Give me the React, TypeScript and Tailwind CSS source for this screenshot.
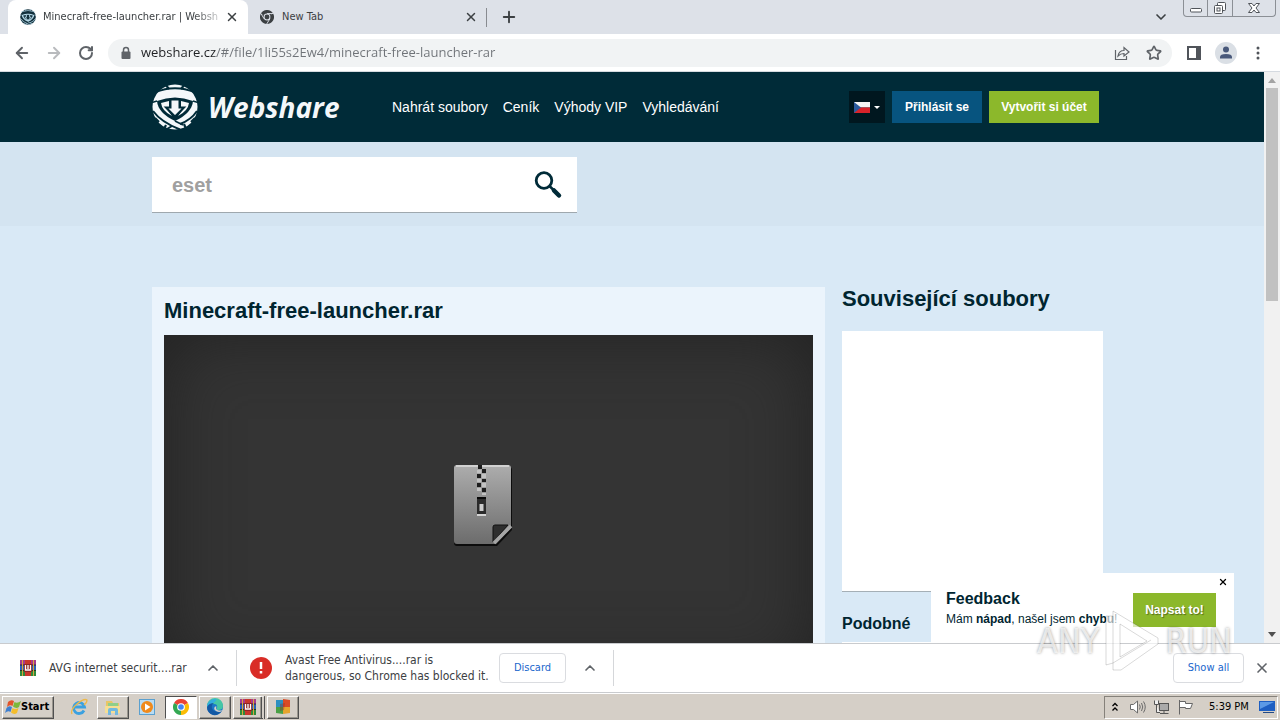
import type { ReactNode } from 'react';
import { ArrowLeft, ArrowRight, ChevronDown, ChevronUp, Plus, RotateCw, Star, X } from 'lucide-react';

const navLinks = ['Nahrát soubory', 'Ceník', 'Výhody VIP', 'Vyhledávání'];

function WebshareMark({ className, fg, bg }: { className: string; fg: string; bg: string }) {
  return (
    <svg viewBox="0 0 46 46" className={className} aria-hidden="true">
      <circle cx="23" cy="23" r="22.500" fill={fg} />
      {/* dark core under the top band */}
      <path d="M5 17Q23 10 41 17Q40 29 23 37Q6 29 5 17Z" fill={bg} />
      <path d="M9 19L17 17V23H13L20 32Q10 27 9 19ZM37 19L29 17V23H33L26 32Q36 27 37 19Z" fill={fg} />
      <path d="M18.500 15.500H27.500V23.500H32L23 32.500L14 23.500H18.500Z" fill={fg} stroke={bg} strokeWidth="2" />
      {/* band edges */}
      <path d="M3 8.500Q23 0 43 8.500" fill="none" stroke={bg} strokeWidth="1.800" />
      <path d="M0 18.500L5 17M46 18.500L41 17" stroke={bg} strokeWidth="1.500" />
      <path d="M1 27Q9 38 28 45.500" fill="none" stroke={bg} strokeWidth="2" />
      <path d="M45 27Q39 36 28 40M20 42L15 45" fill="none" stroke={bg} strokeWidth="2" />
      <path d="M23 37L31 41" stroke={bg} strokeWidth="1.800" />
      {/* notches in the rim */}
      <path d="M13 0L17 5M33 0L29 5M3 34L7 38M43 34L39 38M34 45L32 40M12 45L14 41" stroke={bg} strokeWidth="2.200" />
    </svg>
  );
}

function ChromeIcon({ className, mono = false }: { className: string; mono?: boolean }) {
  const c = mono ? ['#3c4043', '#3c4043', '#3c4043'] : ['#ea4335', '#fbbc04', '#34a853'];
  return (
    <svg viewBox="0 0 24 24" className={className} aria-hidden="true">
      <path d="M12 12L1.6 6A12 12 0 0 1 22.4 6Z" fill={c[0]} />
      <path d="M12 12L22.4 6A12 12 0 0 1 12 24Z" fill={c[1]} />
      <path d="M12 12L12 24A12 12 0 0 1 1.6 6Z" fill={c[2]} />
      {mono && <path d="M12 6H23M7 15L1.5 6M17 15L11.5 24" stroke="#dde1e8" strokeWidth="1.6" />}
      <circle cx="12" cy="12" r="5.8" fill={mono ? '#dde1e8' : '#fff'} />
      <circle cx="12" cy="12" r="4.2" fill={mono ? '#3c4043' : '#4285f4'} />
    </svg>
  );
}

function RarIcon({ className }: { className: string }) {
  return (
    <svg viewBox="0 0 16 16" className={className} aria-hidden="true">
      <rect y="0" width="16" height="5" fill="#a63a8e" />
      <rect y="5" width="16" height="5" fill="#2d5fb8" />
      <rect y="10" width="16" height="6" fill="#2f8a3b" />
      <path d="M0 5H16M0 10.500H16" stroke="#222" strokeWidth=".8" />
      <path d="M2.500 0V16M13.500 0V16" stroke="#d9a53c" strokeWidth="1" />
      <rect x="5" width="6" height="16" fill="#c8372c" />
      <rect x="4" y="4" width="8" height="8" fill="#8e2626" />
      <path d="M5.500 5V10H10.500V5M8 5V9" fill="none" stroke="#fff" strokeWidth="1.3" />
    </svg>
  );
}

function ZipFile() {
  return (
    <svg viewBox="0 0 70 84" className="h-[84px] w-[70px]" aria-hidden="true">
      <defs>
        <linearGradient id="zip" x1="0" y1="0" x2="0" y2="1">
          <stop offset="0" stopColor="#adadad" />
          <stop offset="1" stopColor="#6c6c6c" />
        </linearGradient>
      </defs>
      <path d="M3 4H55Q58 4 58 7V67L43 83H3Q0 83 0 80V7Q0 4 3 4Z" fill="#0c0c0c" />
      <path d="M3 2H54Q57 2 57 5V65L42 81H3Q0 81 0 78V5Q0 2 3 2Z" fill="url(#zip)" />
      <path d="M2 3H55" stroke="#dedede" strokeWidth="1.500" />
      <path d="M39 79V64Q39 62 41 62H54Z" fill="#2e2e2e" stroke="#111" />
      <path d="M40 80L57 63" stroke="#a5a5a5" strokeWidth="3.500" />
      <path
        d="M24 2H28V6H24ZM28 6H32V10H28ZM23 11H27V15H23ZM28 16H32V19H28ZM23 20H27V24H23ZM28 25H32V29H28Z"
        fill="#1d1d1d"
      />
      <path d="M23 7H27V10H23ZM28 11H32V15H28ZM23 16H27V19H23ZM28 20H32V24H28ZM23 25H27V28H23ZM28 30H32V32H28Z" fill="#c2c2c2" />
      <rect x="23" y="34" width="9" height="17" fill="#2b2b2b" />
      <path d="M23 35H32" stroke="#080808" strokeWidth="2" />
      <rect x="25.500" y="41" width="4" height="7" fill="#ccc" />
      <path d="M23 52H32" stroke="#d5d5d5" strokeWidth="2" />
    </svg>
  );
}

function TabStrip() {
  return (
    <div className="flex h-[34px] shrink-0 items-start bg-[#dde1e8] pl-2 text-[11px] text-[#3c4043]">
      <div className="flex h-[34px] w-60 items-center rounded-t-lg bg-white pl-3 pr-[9px]">
        <WebshareMark className="size-4 shrink-0" fg="#12303c" bg="#b9dcec" />
        <span className="ml-[7px] whitespace-nowrap [mask-image:linear-gradient(90deg,#000_86%,#0004)]">
          Minecraft-free-launcher.rar | Websh
        </span>
        <button aria-label="Close tab" className="ml-auto">
          <X className="size-3.5" strokeWidth={2.5} />
        </button>
      </div>
      <div className="flex h-[34px] w-[238px] items-center pl-3 pr-2">
        <ChromeIcon className="size-3.5" mono />
        <span className="ml-2">New Tab</span>
        <button aria-label="Close tab" className="ml-auto">
          <X className="size-3.5" strokeWidth={2.5} />
        </button>
      </div>
      <div className="my-2 h-[19px] w-px bg-[#888b90]" />
      <button aria-label="New tab" className="ml-[13px] self-center">
        <Plus className="size-[18px]" strokeWidth={2.5} />
      </button>
      <button aria-label="Search tabs" className="ml-auto mr-3.5 self-center">
        <ChevronDown className="size-4" strokeWidth={2.5} />
      </button>
      <div className="mr-1 flex h-[17px] divide-x divide-[#8b8f95] rounded-b border border-t-0 border-[#8b8f95]">
        <button aria-label="Minimize" className="flex w-6 items-center justify-center">
          <svg viewBox="0 0 14 12" className="h-3 w-3.5" fill="#fff" stroke="#50545a">
            <rect x="1.500" y="6.500" width="11" height="3.500" rx="1" />
          </svg>
        </button>
        <button aria-label="Restore" className="flex w-[25px] items-center justify-center">
          <svg viewBox="0 0 14 14" className="size-3.5" fill="#fff" stroke="#50545a">
            <rect x="4.500" y="1.500" width="8" height="8" rx="1" />
            <rect x="1.500" y="4.500" width="8" height="8" rx="1" />
            <rect x="4" y="7" width="3" height="3" />
          </svg>
        </button>
        <button aria-label="Close" className="flex w-[42px] items-center justify-center">
          <svg viewBox="0 0 14 12" className="h-3 w-3.5" fill="#fff" stroke="#50545a">
            <path d="M1.500 1.500H5L7 4L9 1.500H12.500L9 6L12.500 10.500H9L7 8L5 10.500H1.500L5 6Z" />
          </svg>
        </button>
      </div>
    </div>
  );
}

function IconButton({ label, children }: { label: string; children: ReactNode }) {
  return (
    <button aria-label={label} className="flex h-7 w-8 shrink-0 items-center justify-center">
      {children}
    </button>
  );
}

function Toolbar() {
  return (
    <div className="flex h-[38px] shrink-0 items-center border-b border-[#d5dae0] bg-white px-1.5 text-[#5f6368]">
      <IconButton label="Back"><ArrowLeft className="size-[18px]" strokeWidth={2.5} /></IconButton>
      <IconButton label="Forward"><ArrowRight className="size-[18px] text-[#b9bbbe]" strokeWidth={2.5} /></IconButton>
      <IconButton label="Reload"><RotateCw className="size-4" strokeWidth={3} /></IconButton>
      <div className="mx-1.5 flex h-7 flex-1 items-center rounded-full bg-[#f1f3f4] pl-3 pr-0.5">
        <svg viewBox="0 0 12 14" className="h-3.5 w-3" aria-hidden="true">
          <path d="M3.500 6V4A2.500 2.500 0 0 1 8.500 4V6" fill="none" stroke="#5f6368" strokeWidth="1.500" />
          <rect x="1.500" y="5.500" width="9" height="7.500" rx="1" fill="#5f6368" />
        </svg>
        <input
          aria-label="Address"
          defaultValue="webshare.cz/#/file/1li55s2Ew4/minecraft-free-launcher-rar"
          className="ml-[9px] min-w-0 flex-1 bg-[linear-gradient(90deg,#202124_75px,#6f7378_75px)] bg-clip-text font-['Open_Sans',sans-serif] text-[13px] text-transparent outline-none"
        />
        <IconButton label="Share">
          <svg viewBox="0 0 16 16" className="size-4" fill="none" stroke="#5f6368" strokeWidth="1.200">
            <path d="M1.500 5V14.500H12.500V11" />
            <path d="M4 11Q5 5.500 10 5.500V2.500L15 7L10 11V8.500Q6.500 8.500 4 11Z" />
          </svg>
        </IconButton>
        <IconButton label="Bookmark">
          <Star className="size-4" strokeWidth={2.5} />
        </IconButton>
      </div>
      <IconButton label="Side panel">
        <svg viewBox="0 0 14 14" className="size-3.5">
          <rect x="1" y="1" width="12" height="12" fill="none" stroke="#50545a" strokeWidth="2" />
          <rect x="9" width="5" height="14" fill="#50545a" />
        </svg>
      </IconButton>
      <IconButton label="Profile">
        <svg viewBox="0 0 22 22" className="size-[22px]">
          <circle cx="11" cy="11" r="11" fill="#dadfe5" />
          <circle cx="11" cy="7.500" r="3" fill="#48587a" />
          <path d="M5 16.500V15Q5 12 11 12T17 15V16.500Z" fill="#48587a" />
        </svg>
      </IconButton>
      <IconButton label="Menu">
        <svg viewBox="0 0 4 16" className="h-4 w-1" fill="#50545a">
          <circle cx="2" cy="3" r="1.500" />
          <circle cx="2" cy="8" r="1.500" />
          <circle cx="2" cy="13" r="1.500" />
        </svg>
      </IconButton>
    </div>
  );
}

function SiteHeader() {
  return (
    <header className="h-[70px] bg-[#002b38]">
      <div className="mx-auto flex h-full max-w-[960px] items-center">
        <a href="#home" className="flex items-center gap-2.5 text-[#f4f8fa]">
          <WebshareMark className="size-[46px]" fg="#f4f8fa" bg="#002b38" />
          <span className="w-[135px] font-['Open_Sans',sans-serif] text-[28px] font-bold italic leading-10">Webshare</span>
        </a>
        <nav className="ml-[49px] flex gap-[15px] text-sm text-white">
          {navLinks.map((label) => (
            <a key={label} href="#nav" className="whitespace-nowrap">{label}</a>
          ))}
        </nav>
        <div className="ml-auto mr-[13px] flex items-center gap-[7px] text-xs font-bold text-white [text-shadow:1px_1px_1px_#0008]">
          <button aria-label="Čeština" className="flex h-8 w-9 items-center justify-center gap-1 bg-[#00171f]">
            <svg viewBox="0 0 16 11" className="h-[11px] w-4">
              <path d="M0 0H16V5.500H0Z" fill="#f5f5f5" />
              <path d="M0 5.500H16V11H0Z" fill="#d8232a" />
              <path d="M0 0L7 5.500L0 11Z" fill="#2a5a9c" />
            </svg>
            <svg viewBox="0 0 6 3" className="h-[3px] w-1.5" fill="#fff"><path d="M0 0H6L3 3Z" /></svg>
          </button>
          <button className="h-8 w-[90px] bg-[#07547f]">Přihlásit se</button>
          <button className="h-8 w-[110px] bg-[#8cb82b]">Vytvořit si účet</button>
        </div>
      </div>
    </header>
  );
}

function SearchBand() {
  return (
    <div className="h-[84px] bg-[#d4e4f1] pt-[15px]">
      <div className="mx-auto max-w-[960px]">
        <form className="flex h-14 w-[425px] items-center border-b border-[#9fa8ae] bg-white pl-5 pr-3.5">
          <input
            aria-label="Vyhledávání"
            defaultValue="eset"
            className="min-w-0 flex-1 text-xl font-bold text-[#a0a0a0] outline-none"
          />
          <button type="button" aria-label="Hledat">
            <svg viewBox="0 0 30 30" className="size-[30px]" fill="none" stroke="#002b38">
              <circle cx="11" cy="10.500" r="7.800" strokeWidth="2.800" />
              <path d="M16 15.500L21 20.500" strokeWidth="2.500" />
              <path d="M21 20.500L26 25.500" strokeWidth="4.500" strokeLinecap="round" />
            </svg>
          </button>
        </form>
      </div>
    </div>
  );
}

function Feedback() {
  return (
    <div className="absolute bottom-0 right-[30px] flex h-[70px] w-[303px] items-start bg-white pl-[15px] pr-[18px] pt-4">
      <div className="whitespace-nowrap">
        <h3 className="text-base font-bold leading-5">Feedback</h3>
        <p className="text-xs leading-5">
          Mám <b>nápad</b>, našel jsem <b>chybu</b>!
        </p>
      </div>
      <button className="ml-auto mt-1 h-[34px] w-[83px] bg-[#8cb82b] text-xs font-bold text-white [text-shadow:1px_1px_1px_#0006]">
        Napsat to!
      </button>
      <button aria-label="Zavřít" className="absolute right-1.5 top-1 text-black">
        <X className="size-2.5" strokeWidth={3} />
      </button>
    </div>
  );
}

function Page() {
  return (
    <div className="flex min-h-0 flex-1">
      <div className="relative min-w-0 flex-1 overflow-hidden bg-[#d9e9f6] text-[#002530]">
        <SiteHeader />
        <SearchBand />
        <main className="mx-auto mt-[61px] flex max-w-[960px] items-start gap-[17px]">
          <section className="w-[673px] bg-[#ebf4fc] p-3 pt-2">
            <h1 className="mb-2 text-[22px] font-bold leading-8">Minecraft-free-launcher.rar</h1>
            <div className="flex h-[340px] items-center justify-center bg-[#343434] shadow-[inset_0_0_70px_#222]">
              <ZipFile />
            </div>
          </section>
          <aside className="w-[261px]">
            <h2 className="mb-5 text-[22px] font-bold leading-6">Související soubory</h2>
            <div className="h-[261px] border-b border-[#a5afb6] bg-white" />
            <h3 className="mb-1.5 mt-5 text-base font-bold leading-6">Podobné</h3>
            <div className="h-20 bg-white" />
          </aside>
        </main>
        <Feedback />
      </div>
      <div className="flex w-4 flex-col items-center bg-[#f1f1f1]">
        <svg viewBox="0 0 16 16" className="size-4" fill="#a3a3a3"><path d="M4 11H12L8 6Z" /></svg>
        <div className="h-[213px] w-3 bg-[#c1c1c1]" />
        <svg viewBox="0 0 16 16" className="mt-auto size-4" fill="#505050"><path d="M4 5H12L8 10Z" /></svg>
      </div>
    </div>
  );
}

function DownloadBar() {
  return (
    <div className="flex h-[50px] shrink-0 items-center border-y border-[#c9cbce] bg-white pl-5 pr-2.5 text-xs text-[#3c4043]">
      <RarIcon className="size-4" />
      <span className="ml-[13px] w-[140px] whitespace-nowrap">AVG internet securit....rar</span>
      <button aria-label="Options" className="ml-4"><ChevronUp className="size-4 text-[#5f6368]" strokeWidth={2.5} /></button>
      <div className="ml-[15px] h-9 w-px bg-[#d5d7da]" />
      <svg viewBox="0 0 22 22" className="ml-[13px] size-[22px]" aria-hidden="true">
        <circle cx="11" cy="11" r="11" fill="#d92d27" />
        <path d="M11 5V12M11 14V16.500" stroke="#fff" strokeWidth="2.500" />
      </svg>
      <p className="ml-[13px] w-[206px] whitespace-nowrap leading-4">
        Avast Free Antivirus....rar is
        <br />
        dangerous, so Chrome has blocked it.
      </p>
      <button className="ml-2 h-[30px] w-[67px] rounded border border-[#dadce0] text-[11px] text-[#1a66cc]">Discard</button>
      <button aria-label="Options" className="ml-4"><ChevronUp className="size-4 text-[#5f6368]" strokeWidth={2.5} /></button>
      <div className="ml-[15px] h-9 w-px bg-[#d5d7da]" />
      <button className="ml-auto h-[30px] w-[71px] rounded border border-[#dadce0] text-[11px] text-[#1a66cc]">Show all</button>
      <button aria-label="Close" className="ml-2.5"><X className="size-4 text-[#5f6368]" strokeWidth={2.5} /></button>
    </div>
  );
}

const raised = 'border border-t-white border-l-white border-b-[#505050] border-r-[#505050] shadow-[inset_-1px_-1px_#9a968e]';
const pressed = 'border border-t-[#505050] border-l-[#505050] border-b-white border-r-white bg-white';

function Task({ label, frame = '', children }: { label: string; frame?: string; children: ReactNode }) {
  return (
    <button aria-label={label} className={`flex h-[23px] w-8 items-center justify-center ${frame}`}>
      {children}
    </button>
  );
}

function Taskbar() {
  return (
    <div className="flex h-[27px] shrink-0 items-center gap-0.5 border-t border-white bg-[#d5cfc7] pl-0.5 pr-0.5 text-[11px] text-black">
      <button className={`mr-[7px] flex h-[23px] w-[52px] items-center pl-0.5 font-bold ${raised}`}>
        <svg viewBox="0 0 16 16" className="size-4" aria-hidden="true">
          <path d="M3 3Q6 0 9 2L7.500 7Q5 5 2 8Z" fill="#e2542b" />
          <path d="M9.500 3Q12 5 16 2L14 8Q11 10 8 7.500Z" fill="#7cb83a" />
          <path d="M1.500 9Q4 6 7 8L5.500 13Q3 11 0 14Z" fill="#3e7fd0" />
          <path d="M7.500 9Q10 11 13.500 9L12 14Q9 16 6 13.500Z" fill="#f4bd2c" />
        </svg>
        Start
      </button>
      <Task label="Internet Explorer">
        <svg viewBox="0 0 18 18" className="size-[18px]" fill="none">
          <path d="M14 12.500A5.500 5.500 0 1 1 14.500 9H4" stroke="#3ba1e0" strokeWidth="2.800" />
          <path d="M2 16Q0 12 7 6T17 2Q17 5 14 7" stroke="#edb94a" strokeWidth="1.300" />
        </svg>
      </Task>
      <Task label="Explorer" frame={raised}>
        <svg viewBox="0 0 18 18" className="size-[18px]">
          <path d="M2 3H8L9 5H15V15H2Z" fill="#e8c665" />
          <path d="M4 5H14V8H4Z" fill="#8fcf8a" />
          <path d="M1 8H16V15H1Z" fill="#f6df93" />
          <path d="M4 17V12Q4 10 6 10H12Q14 10 14 12V17H11V13H7V17Z" fill="#72b9df" />
        </svg>
      </Task>
      <Task label="Media Player">
        <svg viewBox="0 0 18 18" className="size-[18px]">
          <rect x="1.500" y="1.500" width="15" height="15" fill="#b9dcf3" stroke="#5ba0cf" />
          <circle cx="9" cy="9" r="6" fill="#f08a1c" />
          <path d="M7 5.500L12.500 9L7 12.500Z" fill="#fff" />
        </svg>
      </Task>
      <Task label="Chrome" frame={pressed}><ChromeIcon className="size-4" /></Task>
      <Task label="Edge" frame={raised}>
        <svg viewBox="0 0 18 18" className="size-[18px]">
          <circle cx="9" cy="9" r="8" fill="#1b78c8" />
          <path d="M1 8A8 8 0 0 1 17 8Q17 12 12 12Q10 12 11 10Q12 6 8 6Q3 6 1 10Z" fill="#45c6a5" />
          <path d="M1 8A8 8 0 0 1 11 1.300Q9 5 5 6Q2 7 1 10Z" fill="#33aee0" />
          <path d="M1 9Q3 5 8 5Q4 8 7 12Q10 15 16 13Q12 18 7 17Q1 15 1 9Z" fill="#1459a4" />
          <path d="M10.500 8.500Q9 12 13 12.500H17Q14 15 10 13Q7 11 9 8.500Z" fill="#d5cfc7" />
        </svg>
      </Task>
      <Task label="WinRAR" frame={`${raised} border-r-4 border-double`}><RarIcon className="size-4" /></Task>
      <Task label="Security" frame={raised}>
        <svg viewBox="0 0 18 18" className="size-[18px]">
          <path d="M2 2H9V9H2Z" fill="#2c8fc0" />
          <path d="M9 1L16 2V9H9Z" fill="#da4a25" />
          <path d="M2 9H9V16L2 15Z" fill="#4aa045" />
          <path d="M9 9H16V15L9 16Z" fill="#e6a42c" />
          <path d="M6 6L11 5L10 12L6 13Z" fill="#8d2f2c" opacity=".4" />
        </svg>
      </Task>
      <div className="ml-auto flex h-[23px] items-center gap-1.5 border border-b-white border-l-[#85817a] border-r-white border-t-[#85817a] pl-1.5 pr-0.5">
        <svg viewBox="0 0 8 12" className="mr-1 h-3 w-2" fill="none" stroke="#000" strokeWidth="1.300">
          <path d="M1.500 5L4 2.500L6.500 5M1.500 9.500L4 7L6.500 9.500" />
        </svg>
        <svg viewBox="0 0 18 16" className="h-4 w-[18px]" fill="#fff" stroke="#6a6a6a">
          <path d="M1.500 5.500H4.500L8.500 2V14L4.500 10.500H1.500Z" />
          <path d="M10.500 5.500Q12 8 10.500 10.500M12.500 4Q15 8 12.500 12M14.500 2.500Q18 8 14.500 13.500" fill="none" />
        </svg>
        <svg viewBox="0 0 18 16" className="h-4 w-[18px]" fill="#eee" stroke="#555">
          <rect x="6.500" y="4.500" width="9" height="7" fill="#aaa" />
          <path d="M7 14.500H15.500M11 12V14M1.500 1.500V5.500H5.500V1.500M3.500 6V13.500H7" />
        </svg>
        <svg viewBox="0 0 18 16" className="h-4 w-[18px]" fill="#fff" stroke="#666">
          <path d="M2.500 1V15.500M2.500 2.500H8.500V4.500H15.500L13.500 9.500H8.500V8.500H2.500Z" />
        </svg>
        <span className="ml-2 w-10 whitespace-nowrap">5:39 PM</span>
        <svg viewBox="0 0 16 14" className="ml-1 h-3.5 w-4">
          <path d="M0 1H16V11H0Z" fill="#1e5fc2" />
          <path d="M1 2H15L1 9Z" fill="#5c9ae6" />
          <path d="M4 12H15V13H4Z" fill="#234a86" />
        </svg>
      </div>
    </div>
  );
}

function Watermark() {
  return (
    <div className="pointer-events-none absolute bottom-12 right-12 flex items-center gap-1.5 font-['DejaVu_Sans_Condensed',sans-serif] text-[34px] leading-[62px] text-white/70 [text-shadow:0_0_3px_#0006]">
      <span>ANY</span>
      <svg viewBox="0 0 54 62" className="h-[62px] w-[54px]" fill="#ffffffaa" stroke="#00000026" aria-hidden="true">
        <path d="M8 1L53 28V34L16 60H8V53L1 55V6H8ZM15 14V47L42 31Z" fillRule="evenodd" />
        <path d="M8 53L46 30M8 6V53" fill="none" />
      </svg>
      <span>RUN</span>
    </div>
  );
}

export default function App() {
  return (
    <div className="relative flex h-screen flex-col overflow-hidden bg-white font-['Liberation_Sans',Arial,sans-serif]">
      <div className="shrink-0 font-['DejaVu_Sans_Condensed','Open_Sans',sans-serif]">
        <TabStrip />
        <Toolbar />
      </div>
      <Page />
      <div className="shrink-0 font-['DejaVu_Sans_Condensed','Open_Sans',sans-serif]">
        <DownloadBar />
        <Taskbar />
      </div>
      <Watermark />
    </div>
  );
}
